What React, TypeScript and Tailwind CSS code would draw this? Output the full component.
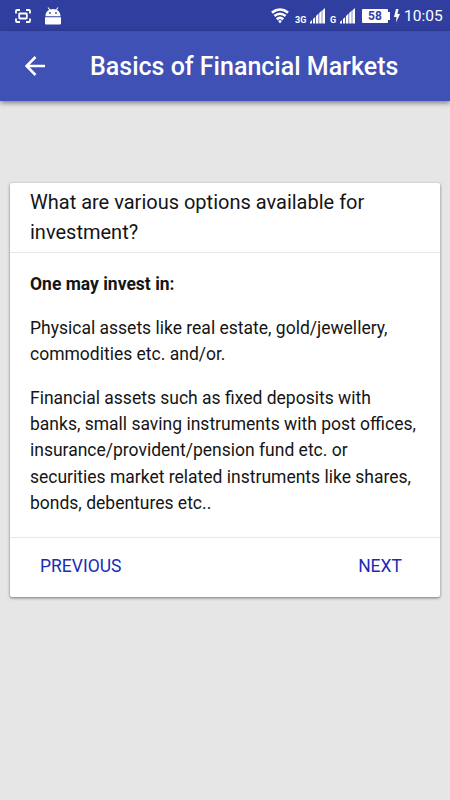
import React from "react";

const paragraphs = [
  "Physical assets like real estate, gold/jewellery, commodities etc. and/or.",
  "Financial assets such as fixed deposits with banks, small saving instruments with post offices, insurance/provident/pension fund etc. or securities market related instruments like shares, bonds, debentures etc..",
];

type SignalProps = {
  label: string;
  labelClass: string;
};

const Signal: React.FC<SignalProps> = ({ label, labelClass }) => (
  <div className="flex items-end">
    <span className={`block text-[9px] font-bold leading-[7px] ${labelClass}`}>
      {label}
    </span>
    <svg width="15" height="16" viewBox="0 0 15 16" fill="#fff">
      <path d="M0 15.500V14L2 12V15.500ZM3 15.500V11L5.200 9V15.500ZM6 15.500V8L8.500 5.500V15.500ZM9.200 15.500V5L11.700 2.500V15.500ZM12.300 15.500V2.500L15 0V15.500Z" />
    </svg>
  </div>
);

const StatusBar: React.FC = () => (
  <div className="flex h-[31px] items-center bg-[#303f9f] text-white">
    {/* Screenshot notification */}
    <svg className="ml-[15px]" width="16" height="14" viewBox="0 0 16 14" fill="none" stroke="#fff" strokeWidth="1.8">
      <path d="M1 4.500V2Q1 1 2 1H5M11 1H14Q15 1 15 2V4.500M15 9.500V12Q15 13 14 13H11M5 13H2Q1 13 1 12V9.500" />
      <rect x="4.200" y="4.500" width="7.600" height="5" rx="0.500" />
    </svg>
    {/* Android debugging */}
    <svg className="ml-3.5" width="16" height="18" viewBox="0 0 16 18">
      <path d="M3 0.500L5.500 4M13 0.500L10.500 4" stroke="#fff" strokeWidth="1.100" />
      <path d="M0.500 9.300C0.500 5 3.500 2 8 2S15.500 5 15.500 9.300ZM0 10.300H16V16.500Q16 17.500 15 17.500H1Q0 17.500 0 16.500Z" fill="#fff" />
      <circle cx="5" cy="6" r="0.900" fill="#303f9f" />
      <circle cx="11" cy="6" r="0.900" fill="#303f9f" />
    </svg>
    <svg className="ml-[210px]" width="18" height="16" viewBox="0 0 18 16" fill="none" stroke="#fff" strokeWidth="2.600">
      <path d="M0.900 4.600Q9 -1.600 17.100 4.600M3.400 8Q9 3.500 14.600 8M5.700 11.200Q9 8.500 12.300 11.200" />
      <path d="M7 12.800Q9 11.500 11 12.800L9 15.500Z" fill="#fff" stroke="none" />
    </svg>
    <div className="ml-[6px] flex gap-[5px]">
      <Signal label="3G" labelClass="w-[15px]" />
      <Signal label="G" labelClass="w-[10px]" />
    </div>
    <div className="ml-[7px] flex items-center">
      <div className="h-[14px] w-[26px] rounded-[1px] bg-white text-center text-[12px] font-bold leading-[14px] text-[#303f9f]">
        58
      </div>
      <div className="h-[8px] w-[2px] bg-white" />
    </div>
    <svg className="ml-[4px]" width="6" height="14" viewBox="0 0 6 14" fill="#fff">
      <path d="M2 0H4.500L3.500 5H6L2 13.500L2.500 8H0Z" />
    </svg>
    <span className="ml-[4px] mt-[3px] text-[15.5px] leading-none">10:05</span>
  </div>
);

const App: React.FC = () => {
  return (
    <div className="h-[800px] w-[450px] overflow-hidden bg-[#e6e6e6] font-['Roboto',sans-serif] text-[#151515]">
      <StatusBar />
      <header className="flex h-[70px] items-center bg-[#3f51b5] text-white shadow-[0_2px_5px_rgba(0,0,0,0.45)]">
        <button className="ml-[25px] w-5">
          <svg width="20" height="20" viewBox="0 0 20 20" fill="none" stroke="#fff" strokeWidth="2.500">
            <path d="M20 10H2M10.500 1L1.600 10L10.500 19" />
          </svg>
        </button>
        <h1 className="ml-[45px] whitespace-nowrap text-[25px] font-medium leading-none">
          Basics of Financial Markets
        </h1>
      </header>

      <main className="mx-2.5 mt-[82px] flex h-[414px] flex-col rounded-[2px] bg-white shadow-[0_1px_3px_rgba(0,0,0,0.5)]">
        <h2 className="h-[70px] border-b border-[#e8e8e8] px-5 pt-1 text-[20px] leading-[30px]">
          What are various options available for investment?
        </h2>
        <div className="flex-1 px-5 pt-[18px] text-[17.5px] leading-[26.25px]">
          <p className="mb-[17.5px] font-bold">One may invest in:</p>
          {paragraphs.map((text) => (
            <p key={text} className="mb-[17.5px]">
              {text}
            </p>
          ))}
        </div>
        <div className="flex h-[60px] items-center justify-between border-t border-[#e8e8e8] pb-0.5 pl-[30px] pr-[38px] text-[17.5px] text-[#1a2bb4]">
          <button>PREVIOUS</button>
          <button>NEXT</button>
        </div>
      </main>
    </div>
  );
};

export default App;
